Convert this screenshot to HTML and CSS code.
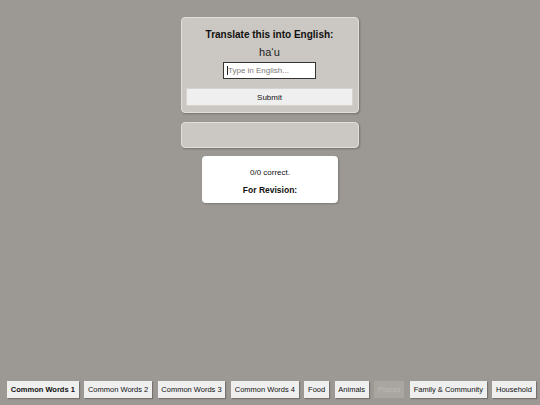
FILE: index.html
```html
<!DOCTYPE html>
<html>
<head>
<meta charset="utf-8">
<link rel="stylesheet" href="styles.css">
</head>
<body>
<div class="page">
  <main class="main">
    <section class="card quiz">
      <h1 class="title">Translate this into English:</h1>
      <div class="word">ha‘u</div>
      <div class="field"><span class="caret"></span><input class="answer" type="text" placeholder="Type in English..."></div>
      <button class="submit">Submit</button>
    </section>
    <section class="card feedback"></section>
    <section class="score">
      <div class="count">0/0 correct.</div>
      <div class="revision">For Revision:</div>
    </section>
  </main>
  <nav class="tabs">
    <button class="tab active">Common Words 1</button>
    <button class="tab">Common Words 2</button>
    <button class="tab">Common Words 3</button>
    <button class="tab">Common Words 4</button>
    <button class="tab">Food</button>
    <button class="tab">Animals</button>
    <button class="tab disabled">Places</button>
    <button class="tab">Family &amp; Community</button>
    <button class="tab">Household</button>
  </nav>
</div>
</body>
</html>
```

FILE: styles.css
```css
html, body {
  margin: 0;
  padding: 0;
  background: #9c9994;
  font-family: "Liberation Sans", Arial, sans-serif;
  color: #111;
}
.page {
  width: 540px;
  height: 405px;
  display: flex;
  flex-direction: column;
  justify-content: space-between;
}
.main {
  display: flex;
  flex-direction: column;
  align-items: center;
  padding-top: 17px;
}
.card {
  box-sizing: border-box;
  width: 178px;
  margin-left: -1px;
  background: #cbc7c2;
  border: 1px solid #e2dfdb;
  border-radius: 4px;
  box-shadow: 1px 1px 2px rgba(0,0,0,0.25);
}
.quiz {
  height: 96px;
  display: flex;
  flex-direction: column;
  align-items: center;
  padding: 10px 5px 0;
}
.title {
  margin: 0;
  font-size: 10px;
  font-weight: bold;
  line-height: 13px;
}
.word {
  margin-top: 5px;
  font-size: 11px;
  line-height: 13px;
  color: #222;
}
.field {
  position: relative;
  margin-top: 3px;
}
.caret {
  position: absolute;
  left: 4px;
  top: 4px;
  width: 1px;
  height: 9px;
  background: #222;
}
.answer {
  display: block;
  box-sizing: border-box;
  width: 93px;
  height: 17px;
  border: 1px solid #333;
  border-radius: 0;
  background: #fff;
  font-family: "Liberation Sans", Arial, sans-serif;
  font-size: 8px;
  padding: 0 3px 0 4px;
  color: #111;
}
.answer::placeholder { color: #7a7a7a; }
.submit {
  box-sizing: border-box;
  margin-top: 9px;
  width: 167px;
  height: 18px;
  background: #efefef;
  border: 1px solid #d6d3cf;
  border-radius: 0;
  font-family: "Liberation Sans", Arial, sans-serif;
  font-size: 8px;
  color: #111;
  padding: 0;
}
.feedback {
  height: 26px;
  margin-top: 9px;
}
.score {
  box-sizing: border-box;
  width: 136px;
  height: 47px;
  margin-top: 8px;
  background: #fff;
  border-radius: 4px;
  box-shadow: 1px 1px 2px rgba(0,0,0,0.2);
  text-align: center;
  padding-top: 12px;
}
.count {
  font-size: 8px;
  line-height: 10px;
}
.revision {
  margin-top: 7px;
  font-size: 8.5px;
  font-weight: bold;
  line-height: 11px;
}
.tabs {
  display: flex;
  gap: 5.5px;
  padding: 0 0 7px 7px;
}
.tab {
  height: 17px;
  padding: 0 3.8px;
  white-space: nowrap;
  flex: none;
  background: #efefef;
  border: none;
  border-radius: 0;
  box-shadow: 1px 1px 1px rgba(0,0,0,0.25);
  font-family: "Liberation Sans", Arial, sans-serif;
  font-size: 7.5px;
  color: #111;
}
.tab.active { font-weight: bold; }
.tab.disabled {
  background: #a9a6a1;
  color: #bcbab6;
  box-shadow: none;
}
```
